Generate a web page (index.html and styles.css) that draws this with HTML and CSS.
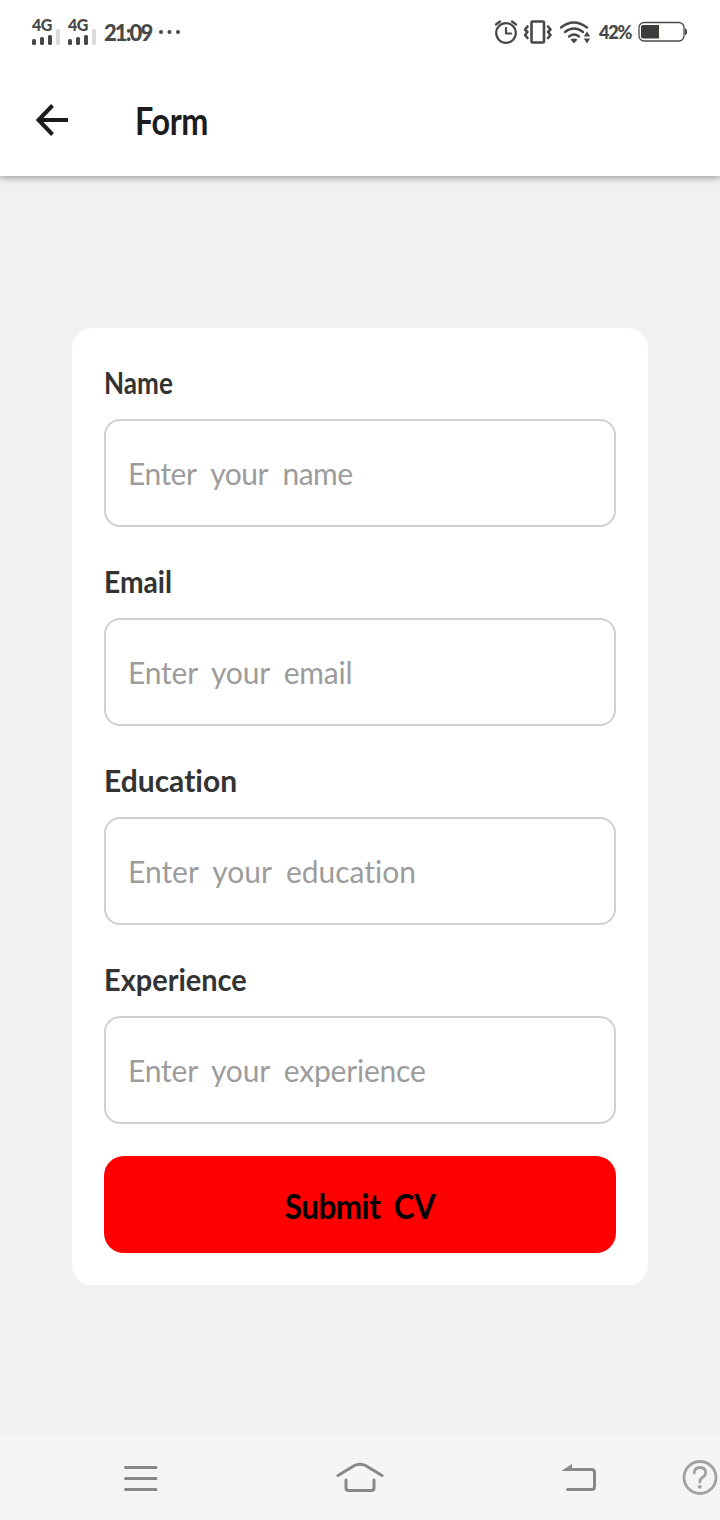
FILE: index.html
```html
<!DOCTYPE html>
<html lang="en">
<head>
<meta charset="utf-8">
<title>Form</title>
<link rel="stylesheet" href="styles.css">
</head>
<body>
<div class="screen">
  <div class="status">
    <div class="sim"><span class="net">4G</span><svg width="29" height="17" viewBox="0 0 29 17"><g fill="#484848"><rect x="0" y="11" width="4" height="6" rx="1.5"/><rect x="8" y="9" width="4" height="8" rx="1.5"/><rect x="16" y="7" width="4" height="10" rx="1.5"/></g><rect x="24" y="1" width="4" height="16" rx="1.5" fill="#dadada"/></svg></div>
    <div class="sim"><span class="net">4G</span><svg width="29" height="17" viewBox="0 0 29 17"><g fill="#484848"><rect x="0" y="11" width="4" height="6" rx="1.5"/><rect x="8" y="9" width="4" height="8" rx="1.5"/><rect x="16" y="7" width="4" height="10" rx="1.5"/></g><rect x="24" y="1" width="4" height="16" rx="1.5" fill="#dadada"/></svg></div>
    <span class="time">21:09</span>
    <svg class="dots" width="22" height="6" viewBox="0 0 22 6" fill="#484848"><circle cx="2" cy="3" r="2"/><circle cx="10.5" cy="3" r="2"/><circle cx="19" cy="3" r="2"/></svg>
    <svg class="system" width="98" height="26" viewBox="0 0 98 26" fill="none" stroke="#484848" stroke-width="2.2" stroke-linecap="round" stroke-linejoin="round">
      <circle cx="12" cy="14" r="9.8"/><path d="M12 9v5.500h5M2 5.500l4-3M22 5.500l-4-3"/>
      <rect x="37.500" y="2.500" width="12.500" height="21" rx="1" stroke-width="2.600"/>
      <path d="M33.500 7.500l-2.500 3 2.500 2.500-2.500 3 2.500 3M54 7.500l2.500 3-2.500 2.500 2.500 3-2.500 3" stroke-width="2.600"/>
      <path d="M67 8.500Q79.500-1.500 93 8.500M71 13Q80 6 89 13M75 17.500Q80 13.500 85 17.500" stroke-width="2.300"/>
      <path d="M76.500 20.500Q80 18.500 83.500 20.500L80 24.500ZM93 12.500l3.200 5h-6.400ZM93 24.500l3.200-5h-6.400Z" fill="#484848" stroke="none"/>
    </svg>
    <span class="percent">42%</span>
    <svg width="50" height="22" viewBox="0 0 50 22"><rect x="1" y="1.500" width="45" height="18.500" rx="5" fill="#fff" stroke="#484848" stroke-width="1.300"/><path d="M5 4h16v13.500H5q-2 0-2-2V6q0-2 2-2Z" fill="#3e3d39"/><path d="M47 7.500q2 0 2 2v2.500q0 2-2 2Z" fill="#484848"/></svg>
  </div>
  <header class="bar">
    <svg width="36" height="36" viewBox="0 0 36 36" fill="none" stroke="#1c1c1e" stroke-width="4"><path d="M34 18H5"/><path d="M18.500 3.500L4.500 18 18.500 32.500"/></svg>
    <h1 class="title">Form</h1>
  </header>
  <main class="content">
    <form class="card">
      <div class="field"><label class="label" for="name"><span class="word name">Name</span></label><input class="input in-name" id="name" placeholder="Enter your name"></div>
      <div class="field"><label class="label" for="email"><span class="word email">Email</span></label><input class="input in-email" id="email" placeholder="Enter your email"></div>
      <div class="field"><label class="label" for="education"><span class="word">Education</span></label><input class="input" id="education" placeholder="Enter your education"></div>
      <div class="field"><label class="label" for="experience"><span class="word experience">Experience</span></label><input class="input in-experience" id="experience" placeholder="Enter your experience"></div>
      <button class="submit" type="button"><span class="caption">Submit CV</span></button>
    </form>
  </main>
  <nav class="nav">
    <svg width="34" height="28" viewBox="0 0 34 28" stroke="#888" stroke-width="3" stroke-linecap="round"><path d="M1.500 3.500h30.500M1.500 14.500h30.500M1.500 25.500h30.500"/></svg>
    <svg class="home" width="48" height="32" viewBox="0 0 48 32" fill="none" stroke="#888" stroke-width="3" stroke-linecap="round"><path d="M2 13.500L18.500 3.500Q24 .8 29.500 3.500L46 13.500"/><path d="M10 18v8q0 2.500 2.500 2.500h23q2.500 0 2.500-2.500v-8"/></svg>
    <svg class="back" width="36" height="30" viewBox="0 0 36 30"><path d="M8 6.500h22.500q3 0 3 3v14q0 3-3 3H6.500" fill="none" stroke="#888" stroke-width="3" stroke-linecap="round"/><path d="M.5 8L11 1v7Z" fill="#888"/></svg>
    <svg class="help" width="36" height="36" viewBox="0 0 36 36" fill="none" stroke="#a1a1a1" stroke-width="2.800" stroke-linecap="round"><circle cx="18" cy="17.500" r="16"/><path d="M12.300 13Q12.300 7.500 18 7.500t5.700 5.500c0 4.500-5.900 4-5.900 9"/><circle cx="17.800" cy="26.800" r="1.900" fill="#a1a1a1" stroke="none"/></svg>
  </nav>
</div>
</body>
</html>
```
FILE: styles.css
```css
* { box-sizing: border-box; }
body { margin: 0; font-family: Lato, "Open Sans", sans-serif; font-variant-ligatures: none; }
svg { display: block; flex: none; }
.screen { width: 720px; height: 1520px; display: flex; flex-direction: column; background: #f1f1f1; overflow: hidden; }
.status { height: 64px; flex: none; padding: 0 31px 0 32px; display: flex; align-items: center; background: #fff; color: #484848; position: relative; z-index: 1; }
.sim { width: 36px; display: flex; flex-direction: column; padding-bottom: 1px; }
.net { font-size: 16px; font-weight: 900; line-height: 12px; height: 9px; letter-spacing: -.5px; }
.time { font-size: 22px; font-weight: 900; letter-spacing: -1.9px; width: 54px; }
.dots { margin-left: 1px; }
.system { margin-left: 313px; }
.percent { width: 39px; margin-left: 7px; font-size: 18px; font-weight: 900; letter-spacing: -1.2px; }
.bar { height: 112px; flex: none; display: flex; align-items: center; gap: 65px; padding: 0 34px; background: #fff; box-shadow: 0 2px 7px rgba(0,0,0,.36); position: relative; }
.title { margin: 0; font-size: 39px; font-weight: 700; letter-spacing: -.5px; color: #1c1c1e; transform: scaleX(.83); transform-origin: left; }
.content { flex: 1; padding: 152px 72px 0; }
.card { height: 957px; padding: 32px; border-radius: 20px; background: #fff; display: flex; flex-direction: column; gap: 32px; }
.field { display: flex; flex-direction: column; gap: 16px; }
.label { height: 43px; line-height: 44px; font-size: 30px; font-weight: 700; color: #333; }
.word { display: inline-block; transform-origin: left; }
.name { transform: scaleX(.87); }
.email { transform: scaleX(.94); }
.experience { transform: scaleX(.965); }
.input { width: 100%; height: 108px; padding: 0 22px; border: 2px solid #d0d0d0; border-radius: 16px; background: #fff; font-family: inherit; font-variant-ligatures: none; font-size: 30px; font-weight: 400; word-spacing: 7px; }
.in-name { letter-spacing: -.5px; word-spacing: 8px; }
.in-email, .in-experience { letter-spacing: -.2px; }
.input::placeholder { color: #9c9c9c; opacity: 1; }
.submit { height: 97px; padding: 0; border: 0; border-radius: 20px; background: #f00; color: #000; font-family: inherit; font-size: 35px; font-weight: 700; word-spacing: 7px; letter-spacing: -.5px; }
.caption { display: inline-block; transform: scaleX(.895); }
.nav { height: 84px; flex: none; display: flex; align-items: center; padding-left: 124px; background: #f5f5f5; }
.home { margin-left: 178px; }
.back { margin-left: 177px; }
.help { margin-left: 85px; }
```
